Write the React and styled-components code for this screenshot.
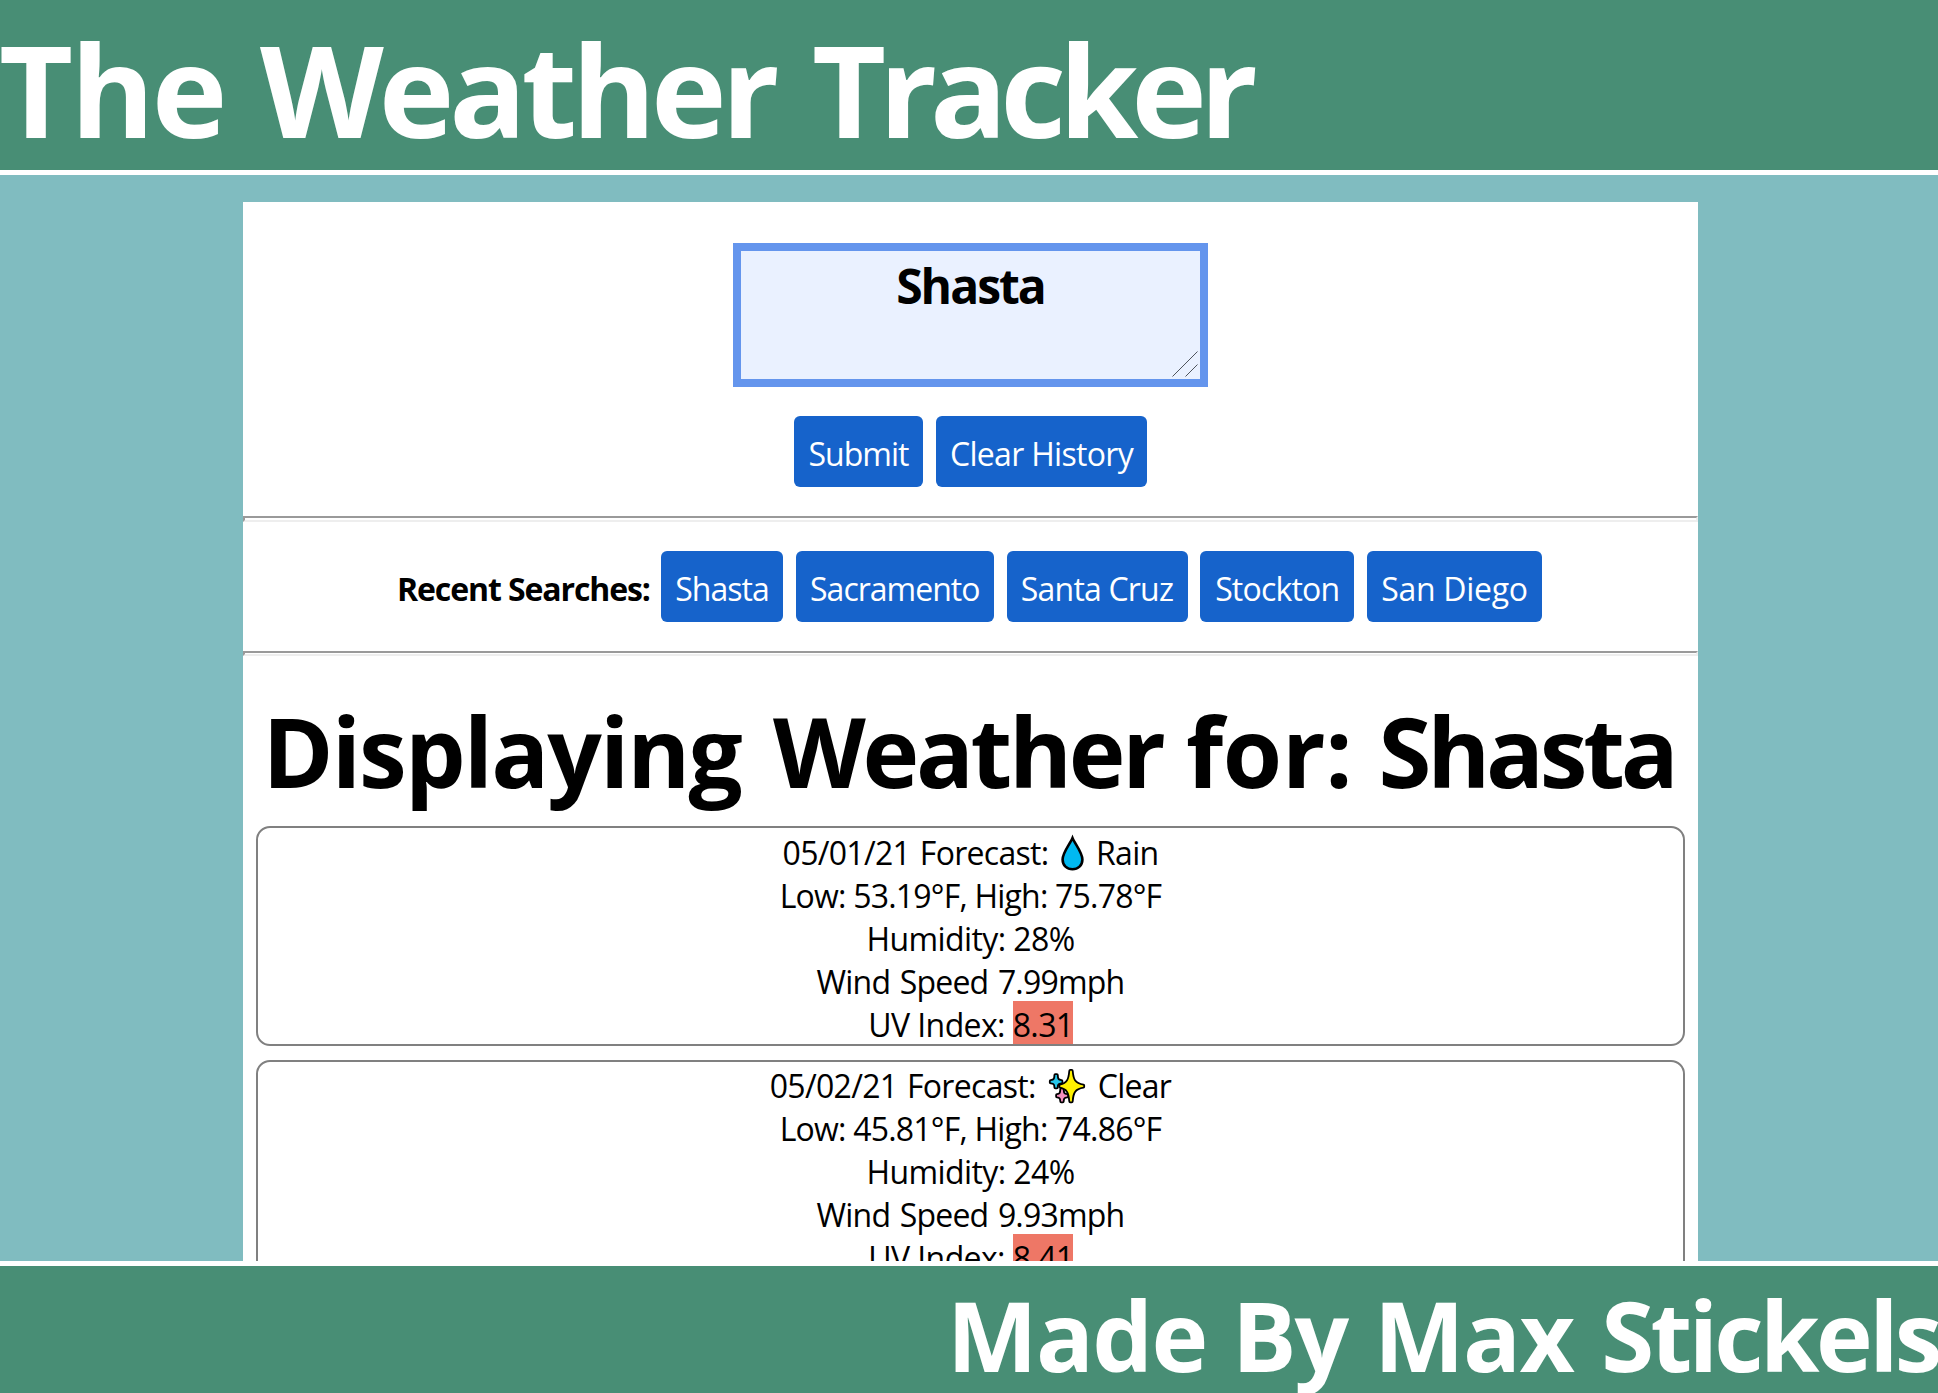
import React from "react";
import styled, { createGlobalStyle } from "styled-components";

const GlobalStyle = createGlobalStyle`
  * { box-sizing: border-box; }
  html, body { margin: 0; height: 100%; overflow: hidden; }
  body {
    font-family: "Segoe UI", "Open Sans", "Noto Sans", sans-serif;
    font-size: 32px;
    color: #000;
    background: #80bcc0;
  }
`;

const Page = styled.div`
  display: flex;
  flex-direction: column;
  height: 100vh;
  overflow: hidden;
`;

const Header = styled.header`
  flex: none;
  height: 175px;
  border-bottom: 5px solid #fff;
  background: #488e75;
  overflow: hidden;
`;

const SiteTitle = styled.h1`
  display: flex;
  margin: 0 0 0 -1px;
  padding-top: 4px;
  font-size: 128px;
  line-height: 170px;
  font-weight: 700;
  white-space: nowrap;
  color: #fff;
`;

const Word = styled.span`
  flex: none;
  width: ${(p) => p.$width}px;
  letter-spacing: ${(p) => p.$track}px;
`;

const Main = styled.main`
  flex: 1;
  min-height: 0;
  overflow: hidden;
  padding: 27px 240px 0 243px;
`;

const Panel = styled.div`
  background: #fff;
  min-height: 1200px;
`;

const SearchForm = styled.form`
  display: flex;
  flex-direction: column;
  align-items: center;
  padding-top: 41px;
  height: 314px;
`;

const InputWrap = styled.div`
  position: relative;
  width: 475px;
  height: 144px;
`;

const CityInput = styled.textarea`
  display: block;
  width: 100%;
  height: 100%;
  margin: 0;
  padding: 3px 4px;
  border: 8px solid #6495ed;
  border-radius: 0;
  outline: none;
  resize: none;
  overflow: hidden;
  background: #eaf1ff;
  color: #000;
  font-family: inherit;
  font-size: 48px;
  line-height: 64px;
  font-weight: 700;
  letter-spacing: ${(p) => p.$track}px;
  text-align: center;
`;

const Grip = styled.svg`
  position: absolute;
  right: 10px;
  bottom: 10px;
`;

const Actions = styled.div`
  display: flex;
  gap: 13px;
  margin-top: 29px;
`;

const Button = styled.button`
  flex: none;
  width: ${(p) => p.$width}px;
  height: 71px;
  margin: 0;
  padding: 3px 0 0;
  border: 0;
  border-radius: 6px;
  background: #1663cb;
  color: #fff;
  font-family: inherit;
  font-size: 32px;
  line-height: 43px;
  letter-spacing: ${(p) => p.$track}px;
  white-space: nowrap;
  text-align: center;
`;

const Divider = styled.hr`
  height: ${(p) => p.$height}px;
  margin: 0;
  border: 2px solid;
  border-color: #9a9a9a #eee #eee #9a9a9a;
`;

const Recent = styled.section`
  display: flex;
  align-items: center;
  height: 129px;
  padding-left: 154px;
`;

const RecentLabel = styled.span`
  width: 264px;
  padding-top: 3px;
  font-weight: 700;
  letter-spacing: ${(p) => p.$track}px;
  white-space: nowrap;
`;

const RecentList = styled.div`
  display: flex;
  gap: 12.75px;
`;

const Heading = styled.h2`
  display: flex;
  margin: 0;
  padding: 31px 0 0 19.5px;
  height: 170px;
  font-size: 96px;
  line-height: 128px;
  font-weight: 700;
  white-space: nowrap;
`;

const DayCard = styled.article`
  height: 220px;
  margin: 0 13px 14px;
  padding-top: ${(p) => p.$inset}px;
  border: 2px solid #808080;
  border-radius: 14px;
  text-align: center;
`;

const Line = styled.div`
  display: flex;
  justify-content: center;
  height: 43px;
  line-height: 48px;
  letter-spacing: ${(p) => p.$track}px;
  word-spacing: ${(p) => p.$gap || 0}px;
  white-space: pre;
`;

const UvBadge = styled.span`
  width: 60px;
  height: 43px;
  background: #ee7766;
`;

const Icon = styled.svg`
  flex: none;
  align-self: flex-start;
  margin: ${(p) => p.$margin};
  overflow: visible;
`;

const Footer = styled.footer`
  flex: none;
  height: 132px;
  border-top: 5px solid #fff;
  background: #488e75;
  overflow: hidden;
`;

const Credit = styled.div`
  display: flex;
  justify-content: flex-end;
  padding-top: 5px;
  color: #fff;
  font-size: 96px;
  line-height: 128px;
  font-weight: 700;
  white-space: nowrap;
`;

function Droplet() {
  return (
    <Icon $margin="6px 12.5px 0 12px" width="23" height="36" viewBox="0 0 23 36">
      <path
        d="M11.5 3 C9 9 1.6 17.5 1.6 24.5 C1.6 30.5 6 34.2 11.5 34.2 C17 34.2 21.4 30.5 21.4 24.5 C21.4 17.5 14 9 11.5 3 Z"
        fill="#00b9f1"
        stroke="#000"
        strokeWidth="2.6"
      />
    </Icon>
  );
}

function Sparkles() {
  return (
    <Icon $margin="7px 13px 0 13px" width="36" height="35" viewBox="0 0 36 35">
      <g stroke="#000" strokeWidth="3.6" strokeLinejoin="round" paintOrder="stroke">
        <path d="M7.9 6 C8 10 8.4 11.6 12.5 12 V13.4 C8.4 13.8 8 15.4 7.9 18.4 H6.3 C6.2 15.4 5.8 13.8 1.7 13.4 V12 C5.8 11.6 6.2 10 6.3 6Z" fill="#26c6ea" />
        <path d="M13.8 20.2 C14 24 14.4 25.6 18.3 26 V27.4 C14.4 27.8 14 29.4 13.8 32.4 H12.2 C12 29.4 11.6 27.8 8 27.4 V26 C11.6 25.6 12 24 12.2 20.2Z" fill="#f48fbf" />
        <path
          d="M22.8 1.8 C23.6 11 25.4 15 34.3 16.6 V17.8 C25.4 19.4 23.6 23 22.8 32.4 H21.2 C20.4 23 18.6 19.4 11.2 17.8 V16.6 C18.6 15 20.4 11 21.2 1.8Z"
          fill="#fff100"
        />
      </g>
    </Icon>
  );
}

const recent = [
  { name: "Shasta", width: 122, track: -1 },
  { name: "Sacramento", width: 198, track: -1 },
  { name: "Santa Cruz", width: 181, track: -0.8 },
  { name: "Stockton", width: 154, track: -0.8 },
  { name: "San Diego", width: 175, track: -0.3 },
];

const titleWords = [
  { text: "The", width: 261, track: -2.7 },
  { text: "Weather", width: 552, track: -5.1 },
  { text: "Tracker", width: 450, track: -7.1 },
];

const headingWords = [
  { text: "Displaying", width: 510.5, track: -1.9 },
  { text: "Weather", width: 413, track: -3.3 },
  { text: "for:", width: 192.5, track: -0.3 },
  { text: "Shasta", width: 300, track: -4.2 },
];

const creditWords = [
  { text: "Made", width: 285, track: -1.6 },
  { text: "By", width: 142, track: -2 },
  { text: "Max", width: 227.3, track: -1.5 },
  { text: "Stickels", width: 336.7, track: -3.6 },
];

const days = [
  { date: "05/01/21", sky: "Rain", icon: Droplet, low: "53.19", high: "75.78", humidity: 28, wind: "7.99", uv: "8.31", inset: 1 },
  { date: "05/02/21", sky: "Clear", icon: Sparkles, low: "45.81", high: "74.86", humidity: 24, wind: "9.93", uv: "8.41", inset: 0 },
];

function Words({ items }) {
  return items.map((w) => (
    <Word key={w.text} $width={w.width} $track={w.track}>{w.text} </Word>
  ));
}

function Day({ day }) {
  const SkyIcon = day.icon;
  return (
    <DayCard $inset={day.inset}>
      <Line $track={-0.7} $gap={2}>
        <span>{day.date} Forecast:</span>
        <SkyIcon />
        <span>{day.sky}</span>
      </Line>
      <Line $track={-0.8}>Low: {day.low}°F, High: {day.high}°F</Line>
      <Line $track={-0.6}>Humidity: {day.humidity}%</Line>
      <Line $track={-0.8} $gap={2}>Wind Speed {day.wind}mph</Line>
      <Line $track={-0.6}>
        <span>UV Index: </span>
        <UvBadge>{day.uv}</UvBadge>
      </Line>
    </DayCard>
  );
}

export default function App() {
  return (
    <Page>
      <GlobalStyle />
      <Header>
        <SiteTitle><Words items={titleWords} /></SiteTitle>
      </Header>
      <Main>
        <Panel>
          <SearchForm onSubmit={(e) => e.preventDefault()}>
            <InputWrap>
              <CityInput $track={-2} defaultValue="Shasta" spellCheck={false} />
              <Grip width="26" height="26" viewBox="0 0 26 26">
                <path d="M0.5 25.5 L25.5 0.5 M13.5 25.5 L25.5 13.5" stroke="#4f545c" strokeWidth="1" fill="none" />
              </Grip>
            </InputWrap>
            <Actions>
              <Button type="submit" $width={129} $track={-1}>Submit</Button>
              <Button type="button" $width={211} $track={-0.7}>Clear History</Button>
            </Actions>
          </SearchForm>
          <Divider $height={6} />
          <Recent>
            <RecentLabel $track={-1.1}>Recent Searches:</RecentLabel>
            <RecentList>
              {recent.map((c) => (
                <Button key={c.name} type="button" $width={c.width} $track={c.track}>{c.name}</Button>
              ))}
            </RecentList>
          </Recent>
          <Divider $height={5} />
          <Heading><Words items={headingWords} /></Heading>
          {days.map((d) => (
            <Day key={d.date} day={d} />
          ))}
        </Panel>
      </Main>
      <Footer>
        <Credit><Words items={creditWords} /></Credit>
      </Footer>
    </Page>
  );
}
